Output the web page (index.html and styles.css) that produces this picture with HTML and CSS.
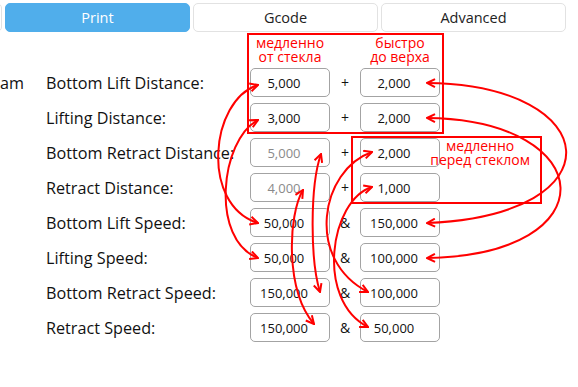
FILE: index.html
```html
<!DOCTYPE html>
<html lang="en">
<head>
    <meta charset="UTF-8">
    <meta name="viewport" content="width=device-width, initial-scale=1.0">
    <title>Print settings</title>
    <link rel="stylesheet" href="styles.css">
</head>
<body>
    <div class="page">
        <div class="tabs">
            <div class="tab"></div>
            <div class="tab active">Print</div>
            <div class="tab">Gcode</div>
            <div class="tab">Advanced</div>
        </div>

        <div class="form">
            <div class="unit">am</div>
            <div class="label">Bottom Lift Distance:</div>
            <div class="box">5,000</div>
            <div class="sep">+</div>
            <div class="box">2,000</div>

            <div class="unit"></div>
            <div class="label">Lifting Distance:</div>
            <div class="box">3,000</div>
            <div class="sep">+</div>
            <div class="box">2,000</div>

            <div class="unit"></div>
            <div class="label">Bottom Retract Distance:</div>
            <div class="box muted">5,000</div>
            <div class="sep">+</div>
            <div class="box">2,000</div>

            <div class="unit"></div>
            <div class="label">Retract Distance:</div>
            <div class="box muted">4,000</div>
            <div class="sep">+</div>
            <div class="box">1,000</div>

            <div class="unit"></div>
            <div class="label">Bottom Lift Speed:</div>
            <div class="box">50,000</div>
            <div class="sep">&amp;</div>
            <div class="box">150,000</div>

            <div class="unit"></div>
            <div class="label">Lifting Speed:</div>
            <div class="box">50,000</div>
            <div class="sep">&amp;</div>
            <div class="box">100,000</div>

            <div class="unit"></div>
            <div class="label">Bottom Retract Speed:</div>
            <div class="box">150,000</div>
            <div class="sep">&amp;</div>
            <div class="box">100,000</div>

            <div class="unit"></div>
            <div class="label">Retract Speed:</div>
            <div class="box">150,000</div>
            <div class="sep">&amp;</div>
            <div class="box">50,000</div>
        </div>

        <!-- пометки -->
        <div class="note note-lift">
            <div class="caption">медленно<br>от стекла</div>
            <div class="caption">быстро<br>до верха</div>
        </div>
        <div class="note note-retract">
            <div class="caption">медленно<br>перед стеклом</div>
        </div>

        <svg class="arrows" width="578" height="387" viewBox="0 0 578 387">
            <defs>
                <marker id="head" viewBox="0 0 10 10" refX="9" refY="5" markerWidth="10" markerHeight="10"
                        markerUnits="userSpaceOnUse" orient="auto-start-reverse">
                    <path d="M1,1 L9,5 L1,9" fill="none" stroke="#f00" stroke-width="2"/>
                </marker>
            </defs>
            <g fill="none" stroke="#f00" stroke-width="2" marker-start="url(#head)" marker-end="url(#head)">
                <path d="M258,85 C210,100 200,205 258,223"/>
                <path d="M258,120 C220,140 210,240 258,258"/>
                <path d="M321,154 C310,185 310,260 320,292"/>
                <path d="M303,190 C288,215 285,290 314,324"/>
                <path d="M372,152 C320,170 305,260 368,292"/>
                <path d="M372,187 C330,200 315,300 368,327"/>
                <path d="M427,83 C605,85 620,215 427,223"/>
                <path d="M427,118 C600,120 610,255 427,258"/>
            </g>
        </svg>
    </div>
</body>
</html>
```

FILE: styles.css
```css
body {
    margin: 0;
    background: #fff;
    font-family: 'Open Sans', 'Noto Sans', sans-serif;
    color: #111;
}

.page {
    position: relative;
    width: 578px;
    height: 387px;
    overflow: hidden;
}

.tabs {
    display: flex;
    gap: 3px;
    padding-top: 3px;
    margin-left: -183px;
}

.tab {
    flex: 0 0 185px;
    height: 29px;
    box-sizing: border-box;
    border: 1px solid #e2e2e2;
    border-radius: 5px;
    display: flex;
    align-items: center;
    justify-content: center;
    font-size: 14.5px;
    color: #222;
}

.tab.active {
    background-color: #50aeeb;
    border-color: #50aeeb;
    color: #fff;
}

.form {
    display: grid;
    grid-template-columns: 46px 204px 80px 30px 80px;
    grid-auto-rows: 29px;
    row-gap: 6px;
    margin-top: 36px;
    align-items: center;
}

.unit,
.label {
    font-size: 16.2px;
    white-space: nowrap;
}

.box {
    height: 29px;
    box-sizing: border-box;
    border: 1px solid #a3a3a3;
    border-radius: 5px;
    display: flex;
    align-items: center;
    justify-content: center;
    padding-right: 12px;
    font-size: 13px;
}

.box.muted {
    color: #8a8a8a;
}

.sep {
    text-align: center;
    font-size: 14px;
}

.note {
    position: absolute;
    box-sizing: border-box;
    border: 2px solid #f00;
    color: #f00;
    font-size: 14px;
    line-height: 14px;
}

.note-lift {
    left: 247px;
    top: 33px;
    width: 197px;
    height: 101px;
    display: flex;
    gap: 30px;
    padding: 1px 0 0 1px;
}

.note-lift .caption {
    width: 80px;
    text-align: center;
}

.note-retract {
    left: 351px;
    top: 136px;
    width: 191px;
    height: 68px;
    display: flex;
    justify-content: flex-end;
    padding: 1px 10px 0 0;
}

.note-retract .caption {
    text-align: center;
}

.arrows {
    position: absolute;
    left: 0;
    top: 0;
    pointer-events: none;
}
```
